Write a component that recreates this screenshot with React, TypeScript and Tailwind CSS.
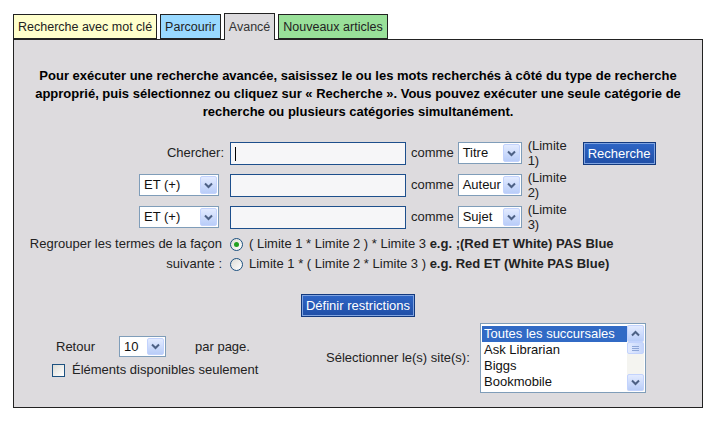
import React from "react";

const font = { fontFamily: '"Liberation Sans", Arial, sans-serif' };

function Chevron({ up = false }: { up?: boolean }) {
  return (
    <svg width="9" height="7" viewBox="0 0 9 7" className={up ? "rotate-180" : ""}>
      <path d="M1 1.5 L4.5 5 L8 1.5" fill="none" stroke="#4d6185" strokeWidth="2" />
    </svg>
  );
}

function ArrowBtn({ up = false, className = "" }: { up?: boolean; className?: string }) {
  return (
    <div
      className={`flex items-center justify-center rounded-[2px] border border-[#c3d3fd] bg-gradient-to-b from-[#e3ebff] to-[#b9cdf8] ${className}`}
    >
      <Chevron up={up} />
    </div>
  );
}

function Dropdown({ value, w, h = 22 }: { value: string; w: number; h?: number }) {
  return (
    <div
      className="flex items-center border border-[#7f9db9] bg-white text-[13px] text-[#111]"
      style={{ width: w, height: h }}
    >
      <span className="flex-1 pl-[4px] whitespace-nowrap overflow-hidden">{value}</span>
      <ArrowBtn className="mr-[1px] h-[calc(100%-2px)] w-[17px]" />
    </div>
  );
}

function TextInput({ focused = false }: { focused?: boolean }) {
  return (
    <div className="relative h-[23px] w-[176px] border border-[#1d4f8c] bg-[#f6f6f8]">
      {focused && <div className="absolute left-[4px] top-[4px] h-[14px] w-px bg-black" />}
    </div>
  );
}

function BlueButton({ label }: { label: string }) {
  return (
    <div className="border border-[#12397e] bg-gradient-to-b from-[#2f66c6] to-[#1f4ea6] px-[4px] py-[1px] text-[13px] leading-[19px] text-white shadow-[inset_0_0_0_1px_#7fa3e0]">
      {label}
    </div>
  );
}

function Radio({ checked = false }: { checked?: boolean }) {
  return (
    <div className="flex h-[13px] w-[13px] items-center justify-center rounded-full border border-[#1c5180] bg-gradient-to-br from-[#dcdcd6] to-white">
      {checked && <div className="h-[5px] w-[5px] rounded-full bg-[#21a121]" />}
    </div>
  );
}

function Limite({ n }: { n: number }) {
  return (
    <div className="w-[45px] text-[13px] leading-[15px] text-[#222]">
      (Limite
      <br />
      {n})
    </div>
  );
}

const tabs = [
  { label: "Recherche avec mot clé", bg: "bg-[#ffffcc]" },
  { label: "Parcourir", bg: "bg-[#99d9ff]" },
  { label: "Avancé", bg: "bg-[#dddbde]", active: true },
  { label: "Nouveaux articles", bg: "bg-[#99e099]" },
];

const sites = ["Toutes les succursales", "Ask Librarian", "Biggs", "Bookmobile"];

export default function App() {
  return (
    <div className="h-[424px] w-[716px] bg-white pl-[13px] pt-[13px]" style={font}>
      <div className="flex items-end gap-[3px]">
        {tabs.map((t) =>
          t.active ? (
            <div
              key={t.label}
              className={`relative z-10 -mb-px h-[27px] border border-b-0 border-[#222] px-[4px] pt-[6px] text-[12.5px] leading-[14px] text-[#333] ${t.bg}`}
            >
              {t.label}
            </div>
          ) : (
            <div
              key={t.label}
              className={`h-[25px] border border-[#222] px-[4px] pt-[5px] text-[12.5px] leading-[14px] text-[#222] ${t.bg}`}
            >
              {t.label}
            </div>
          )
        )}
      </div>

      <div className="h-[369px] w-[690px] border border-[#222] bg-[#dddbde]">
        <p className="whitespace-nowrap pt-[27px] text-center text-[13px] font-bold leading-[18px] text-black">
          Pour exécuter une recherche avancée, saisissez le ou les mots recherchés à côté du type de recherche
          <br />
          approprié, puis sélectionnez ou cliquez sur « Recherche ». Vous pouvez exécuter une seule catégorie de
          <br />
          recherche ou plusieurs catégories simultanément.
        </p>

        <div className="mt-[16px]">
          <div className="flex h-[32px] items-center">
            <div className="w-[210px] text-right text-[13px] text-[#222]">Chercher:</div>
            <div className="ml-[6px]">
              <TextInput focused />
            </div>
            <span className="ml-[5px] text-[13px] text-[#222]">comme</span>
            <div className="ml-[4px]">
              <Dropdown value="Titre" w={64} />
            </div>
            <div className="ml-[6px]">
              <Limite n={1} />
            </div>
            <div className="ml-[10px]">
              <BlueButton label="Recherche" />
            </div>
          </div>
          {[
            { field: "Auteur", n: 2 },
            { field: "Sujet", n: 3 },
          ].map((r) => (
            <div key={r.n} className="flex h-[32px] items-center">
              <div className="flex w-[210px] justify-end pr-[5px]">
                <Dropdown value="ET (+)" w={80} />
              </div>
              <div className="ml-[6px]">
                <TextInput />
              </div>
              <span className="ml-[5px] text-[13px] text-[#222]">comme</span>
              <div className="ml-[4px]">
                <Dropdown value={r.field} w={64} />
              </div>
              <div className="ml-[6px]">
                <Limite n={r.n} />
              </div>
            </div>
          ))}
        </div>

        <div className="mt-px flex text-[13px] leading-[20px] text-[#222]">
          <div className="w-[208px] text-right">
            Regrouper les termes de la façon
            <br />
            suivante :
          </div>
          <div className="ml-[8px]">
            <div className="flex items-center gap-[6px]">
              <Radio checked />
              <span>
                ( Limite 1 * Limite 2 ) * Limite 3 <b>e.g. ;(Red ET White) PAS Blue</b>
              </span>
            </div>
            <div className="flex items-center gap-[6px]">
              <Radio />
              <span>
                Limite 1 * ( Limite 2 * Limite 3 ) <b>e.g. Red ET (White PAS Blue)</b>
              </span>
            </div>
          </div>
        </div>

        <div className="mt-[20px] flex justify-center">
          <BlueButton label="Définir restrictions" />
        </div>

        <div className="mt-[6px] flex items-center text-[13px] text-[#222]">
          <div className="ml-[38px] w-[274px]">
            <div className="flex items-center">
              <span className="ml-[4px] w-[63px]">Retour</span>
              <Dropdown value="10" w={47} h={21} />
              <span className="ml-[29px]">par page.</span>
            </div>
            <div className="mt-[3px] flex items-center gap-[7px]">
              <div className="h-[13px] w-[13px] border border-[#1c5180] bg-gradient-to-br from-[#dcdcd6] to-white" />
              <span>Éléments disponibles seulement</span>
            </div>
          </div>
          <span className="w-[154px]">Sélectionner le(s) site(s):</span>
          <div className="flex h-[70px] w-[166px] border border-[#7f9db9] bg-white p-px">
            <div className="flex-1 pt-[1px]">
              {sites.map((s, i) => (
                <div
                  key={s}
                  className={`h-[16px] whitespace-nowrap pl-[2px] leading-[16px] ${
                    i === 0 ? "bg-[#316ac5] text-white" : "text-[#111]"
                  }`}
                >
                  {s}
                </div>
              ))}
            </div>
            <div className="flex w-[17px] flex-col bg-[#f4f4f0]">
              <ArrowBtn up className="h-[17px] w-[17px]" />
              <div className="flex h-[12px] w-[17px] items-center justify-center rounded-[2px] border border-[#c3d3fd] bg-gradient-to-r from-[#e3ebff] to-[#c6d6fb]">
                <div className="flex flex-col gap-[1px]">
                  <div className="h-px w-[7px] bg-[#8ea6d8]" />
                  <div className="h-px w-[7px] bg-[#8ea6d8]" />
                  <div className="h-px w-[7px] bg-[#8ea6d8]" />
                </div>
              </div>
              <div className="flex-1" />
              <ArrowBtn className="h-[17px] w-[17px]" />
            </div>
          </div>
        </div>
      </div>
    </div>
  );
}
